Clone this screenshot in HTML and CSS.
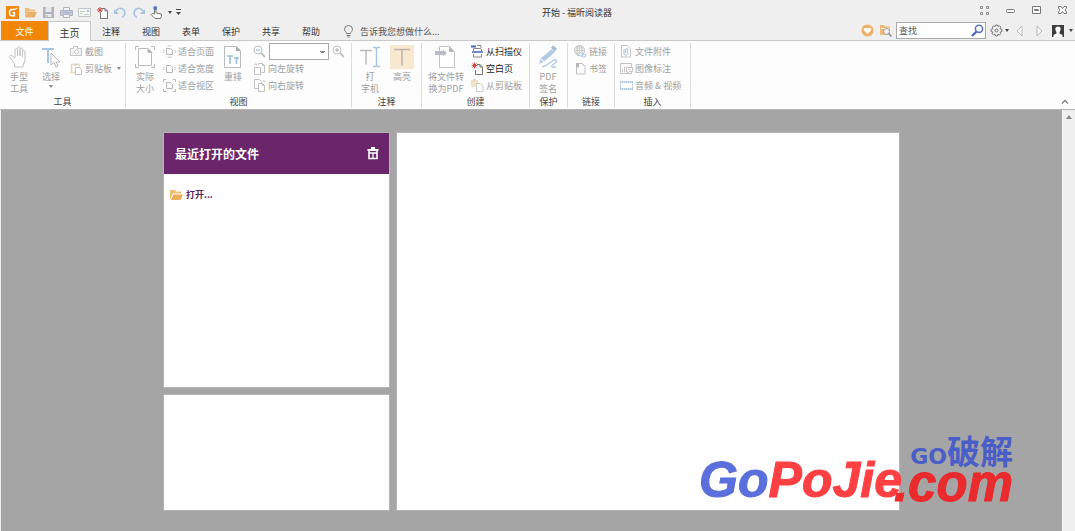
FILE: index.html
```html
<!DOCTYPE html>
<html lang="zh-CN">
<head>
<meta charset="utf-8">
<title>开始 - 福昕阅读器</title>
<link rel="stylesheet" href="styles.css">
</head>
<body>
<div class="app">
  <header class="titlebar">
    <div class="quick">
      <button class="qbtn" aria-label="福昕"><svg width="13" height="13" viewBox="0 0 13 13"><rect width="13" height="13" fill="#f28a12"/><path d="M9 3.600H5.200L3.600 5.200v3.200l1.600 1.400h3.200V6.800H6.400" fill="none" stroke="#fff" stroke-width="1.500"/><path d="M9 3.500l2-1.500" stroke="#fff"/></svg></button>
      <button class="qbtn" aria-label="打开"><svg width="13" height="13" viewBox="0 0 13 13"><path d="M1 11V2h4l1 1.500h5v2H4L2 11z" fill="#efbb7a"/><path d="M4 6h9l-2.500 5.500H1.500z" fill="#eab06a"/></svg></button>
      <button class="qbtn" aria-label="保存"><svg width="13" height="13" viewBox="0 0 13 13"><path d="M1 1h11v11H1z" fill="#b0b3ba"/><path d="M3.500 1h6v5h-6zM3.500 8h6v3h-6z" fill="#e6e8ec"/><path d="M5 9v2" stroke="#acb0b8"/></svg></button>
      <button class="qbtn" aria-label="打印"><svg width="13" height="13" viewBox="0 0 13 13"><path d="M.5 4.500h12v5H.5z" fill="#c4c8d0" stroke="#b0b5c0"/><path d="M3.500 1.500h6v3h-6z" fill="#f4f5f7" stroke="#b0b5c0"/><path d="M3.500 8.500h6v3h-6z" fill="#f4f5f7" stroke="#b0b5c0"/><path d="M2 6.500h9" stroke="#9bb9dd"/></svg></button>
      <button class="qbtn" aria-label="邮件"><svg width="13" height="13" viewBox="0 0 13 13"><path d="M.5 2.500h12v8H.5z" fill="#f7f7f7" stroke="#c0c3c8"/><path d="M2 5.500h5M2 7.500h3M6 8.500h5" stroke="#bcd3c0"/><path d="M9 4h2v2H9z" fill="#a9bddd"/></svg></button>
      <button class="qbtn" aria-label="新建"><svg width="13" height="13" viewBox="0 0 13 13"><path d="M5 2.500h4l2.500 2.500v7.500h-7V7" fill="#fff" stroke="#777"/><path d="M9 2.500V5h2.500" fill="none" stroke="#777"/><path d="M4 1v6M1 4h6M2 2l4 4M6 2L2 6" stroke="#cf4a3e"/></svg></button>
      <button class="qbtn" aria-label="撤销"><svg width="13" height="13" viewBox="0 0 13 13"><path d="M2 5.500a4.600 4.600 0 1 1 6 5.800" fill="none" stroke="#a7c1e2" stroke-width="1.700"/><path d="M0 3v5h5z" fill="#a7c1e2"/></svg></button>
      <button class="qbtn" aria-label="重做"><svg width="13" height="13" viewBox="0 0 13 13"><path d="M11 5.500a4.600 4.600 0 1 0-6 5.800" fill="none" stroke="#a7c1e2" stroke-width="1.700"/><path d="M13 3v5H8z" fill="#a7c1e2"/></svg></button>
      <button class="qbtn" aria-label="触摸模式"><svg width="13" height="13" viewBox="0 0 13 13"><path d="M4.500 8V3H6v4l5.500 1v2l-1 2.500H5L1 8.500l1-1z" fill="#fff" stroke="#777"/><circle cx="5.200" cy="2" r="2" fill="#4c7cc8"/></svg></button>
      <button class="cbtn" aria-label="触摸选项"><i class="caret"></i></button>
      <button class="cbtn" aria-label="自定义"><svg width="5" height="6" viewBox="0 0 5 6"><path d="M0 .5h5" stroke="#444"/><path d="M0 3h5L2.500 6z" fill="#444"/></svg></button>
    </div>
    <h1 class="title">开始 - 福昕阅读器</h1>
    <div class="wctl">
      <button class="wbtn" aria-label="布局"><svg width="11" height="11" viewBox="0 0 11 11" fill="none" stroke="#888"><path d="M1.500 1.500h2v2h-2zM7.500 1.500h2v2h-2zM1.500 7.500h2v2h-2zM7.500 7.500h2v2h-2z"/></svg></button>
      <button class="wbtn" aria-label="最小化"><svg width="11" height="11" viewBox="0 0 11 11"><rect x="1.500" y="4.500" width="8" height="3" rx="1" fill="#fff" stroke="#777"/></svg></button>
      <button class="wbtn" aria-label="还原"><svg width="11" height="11" viewBox="0 0 11 11" fill="#fff" stroke="#777"><path d="M1.500 1.500h8v7h-8zM3.500 4.500h4v1h-4z"/></svg></button>
      <button class="wbtn" aria-label="关闭"><svg width="11" height="11" viewBox="0 0 11 11"><path d="M1.500 1.500h2.500l1.500 2 1.500-2h2.500v1.500L8 5l1.500 2v1.500H7l-1.500-2-1.500 2H1.500V7L3 5 1.500 3z" fill="#fff" stroke="#777"/></svg></button>
    </div>
  </header>

  <nav class="tabs">
    <button class="tab file">文件</button>
    <button class="tab active">主页</button>
    <button class="tab">注释</button>
    <button class="tab">视图</button>
    <button class="tab">表单</button>
    <button class="tab">保护</button>
    <button class="tab">共享</button>
    <button class="tab">帮助</button>
    <button class="tell"><svg width="11" height="13" viewBox="0 0 11 13" fill="none" stroke="#777"><path d="M3.500 8.500C3.500 7 1.500 6.500 1.500 4.300a4 3.800 0 0 1 8 0c0 2.200-2 2.700-2 4.200zM3.500 10.500h4M4.500 12h2"/></svg><span>告诉我您想做什么...</span></button>
    <div class="tools">
      <button class="tbtn" aria-label="收藏"><svg width="13" height="13" viewBox="0 0 13 13"><circle cx="6.500" cy="6.500" r="6" fill="#eeb064"/><path d="M6.500 10L3 6.500C1.800 4.500 4.800 2.500 6.500 4.800 8.200 2.500 11.200 4.500 10 6.500z" fill="#fff"/></svg></button>
      <button class="tbtn" aria-label="查找文件夹"><svg width="13" height="13" viewBox="0 0 13 13"><path d="M1 11V1h4l1 1.500h5V11z" fill="#efb978"/><path d="M2 4.500h8" stroke="#fff"/><circle cx="7.500" cy="7.500" r="3" fill="#f3f3f3" stroke="#999"/><path d="M9.800 9.800l2.700 2.700" stroke="#888" stroke-width="1.500"/></svg></button>
      <form class="search">
        <input type="text" placeholder="查找" aria-label="查找">
        <button class="go" type="button" aria-label="搜索"><svg width="13" height="13" viewBox="0 0 13 13"><circle cx="8" cy="4.800" r="3.600" fill="#fff" stroke="#5576c0" stroke-width="1.600"/><path d="M5.300 7.700L1 12" stroke="#4466b8" stroke-width="2.200"/></svg></button>
      </form>
      <button class="gear" aria-label="设置"><svg width="13" height="13" viewBox="0 0 13 13" fill="none" stroke="#777"><path d="M5.500 1h2l.4 1.500 1.500-.8 1.400 1.400-.8 1.500L12 5.500v2l-1.900.6.700 1.500-1.400 1.400-1.500-.8-.4 1.800h-2l-.5-1.800-1.500.8-1.400-1.400.8-1.500L1 7.500v-2l1.900-.7-.8-1.600 1.400-1.400 1.500.8z"/><circle cx="6.500" cy="6.500" r="1.500"/></svg><i class="caret"></i></button>
      <button class="arrow" aria-label="上一个"><svg width="7" height="12" viewBox="0 0 7 12"><path d="M6 1v10L1 6z" fill="#f8f8f8" stroke="#bbb"/></svg></button>
      <button class="arrow" aria-label="下一个"><svg width="7" height="12" viewBox="0 0 7 12"><path d="M1 1v10l5-5z" fill="#f8f8f8" stroke="#bbb"/></svg></button>
      <button class="user" aria-label="账户"><svg width="12" height="12" viewBox="0 0 12 12"><path d="M0 0h12v12H0z" fill="#3d3d3d"/><path d="M6 1.500c4 0 2.500 4.500 1.500 5.500v1.500l3 1.500v2h-9v-2l3-1.500V7C3.500 6 2 1.500 6 1.500z" fill="#fff"/></svg><i class="caret"></i></button>
    </div>
  </nav>

  <section class="ribbon">
    <div class="group g-tools">
      <div class="body">
        <button class="big"><svg width="22" height="24" viewBox="0 0 22 24"><path d="M6.500 22v-3L2 12.500c-1-2 1-3 2.500-1.500L7 13V5c0-2 2.500-2 2.500 0v6V3.500c0-2 2.500-2 2.500 0V11 4.500c0-2 2.500-2 2.500 0V12 7c0-2 2.500-2 2.500 0v9l-2 4v2z" fill="#fff" stroke="#c0c0c0"/></svg><span>手型<br>工具</span></button>
        <button class="big"><svg width="22" height="24" viewBox="0 0 22 24"><path d="M2 4h12M8 4v14" stroke="#a9c3e2" stroke-width="2"/><path d="M11 8v12l3-2.500 2 4.500 2-1-2-4h4z" fill="#fff" stroke="#b5b5b5"/></svg><span>选择</span><i class="caret dim"></i></button>
        <div class="col">
          <button class="small"><svg width="13" height="13" viewBox="0 0 13 13" fill="none" stroke="#aaa"><path d="M.5 3.500h3v-2h4v2h4v7H.5z"/><circle cx="6.500" cy="6.800" r="2"/><path d="M3 3.500v7M10 3.500v7" stroke="#ddd"/></svg>截图</button>
          <button class="small"><svg width="13" height="13" viewBox="0 0 13 13"><path d="M1.500 2.500h8v8h-8z" fill="#fff" stroke="#e8c88f" stroke-width="1.500"/><path d="M4 1.500h3v2H4z" fill="#bbb"/><path d="M5.500 5.500h4l2 2v5h-6z" fill="#fff" stroke="#aaa"/></svg>剪贴板<i class="caret dim"></i></button>
        </div>
      </div>
      <h2>工具</h2>
    </div>
    <div class="group g-view">
      <div class="body">
        <button class="big"><svg width="22" height="24" viewBox="0 0 22 24" fill="none" stroke="#bbb"><path d="M1.500 5V1.500H5M17 1.500h3.500V5M1.500 19v3.500H5M17 22.500h3.500V19"/><path d="M4.500 3.500h9l4 4v13h-13z" fill="#fff"/><path d="M14 3.500v4h4z" fill="#aaa"/></svg><span>实际<br>大小</span></button>
        <div class="col">
          <button class="small"><svg width="13" height="13" viewBox="0 0 13 13" fill="none" stroke="#999"><path d="M3.500 3.500h4l2 2v4h-6z"/><path d="M5 1.500L6.500 0 8 1.500M5 11.500L6.500 13 8 11.500M1.500 5L0 6.500 1.500 8M11.500 5L13 6.500 11.500 8"/></svg>适合页面</button>
          <button class="small"><svg width="13" height="13" viewBox="0 0 13 13" fill="none" stroke="#999"><path d="M3.500 3.500h4l2 2v5h-6z"/><path d="M1.500 5L0 6.500 1.500 8M11.500 5L13 6.500 11.500 8"/></svg>适合宽度</button>
          <button class="small"><svg width="13" height="13" viewBox="0 0 13 13" fill="none" stroke="#999"><path d="M3.500 3.500h4l2 2v4h-6z"/><path d="M.5 3V.5H3M10 .5h2.500V3M.5 10v2.500H3M10 12.500h2.500V10"/></svg>适合视区</button>
        </div>
        <button class="big reflow"><svg width="22" height="24" viewBox="0 0 22 24"><path d="M2.500 1.500h12l4 4v17h-16z" fill="#fff" stroke="#bbb"/><path d="M14 1.500v4.500h4.500z" fill="#aaa"/><path d="M5 11h6M8 11v8M12 13h5M14.500 13v6" stroke="#9dbce0" stroke-width="1.600"/></svg><span>重排</span></button>
        <div class="col">
          <div class="zoomrow">
            <button class="icon" aria-label="缩小"><svg width="13" height="13" viewBox="0 0 13 13" fill="none" stroke="#c0c0c0"><circle cx="5" cy="5" r="4"/><path d="M8 8l4 4" stroke-width="1.800"/><path d="M3 5h4" stroke="#8fb2dc"/></svg></button>
            <select aria-label="缩放比例"><option></option></select>
            <button class="icon" aria-label="放大"><svg width="13" height="13" viewBox="0 0 13 13" fill="none" stroke="#c0c0c0"><circle cx="5" cy="5" r="4"/><path d="M8 8l4 4" stroke-width="1.800"/><path d="M3 5h4M5 3v4" stroke="#aaa"/></svg></button>
          </div>
          <button class="small"><svg width="13" height="13" viewBox="0 0 13 13" fill="#fff" stroke="#aaa"><path d="M5.500 3V1.500h4l2 2v7h-3M9.500 1.500v2h2"/><path d="M1.500 5.500h6v7h-6zM1 3.500l2-2 1 2"/></svg>向左旋转</button>
          <button class="small"><svg width="13" height="13" viewBox="0 0 13 13" fill="#fff" stroke="#aaa"><path d="M1.500.5h5l2 2v7h-7z"/><path d="M5.500 4.500h4l2 2v6h-6zM9.500 4.500v2h2M10 1.500l2 1v1"/></svg>向右旋转</button>
        </div>
      </div>
      <h2>视图</h2>
    </div>
    <div class="group g-comment">
      <div class="body">
        <button class="big"><svg width="24" height="24" viewBox="0 0 24 24" fill="none"><path d="M2 5.500h12M8 5.500v14" stroke="#bbb" stroke-width="1.500"/><path d="M15 2.500h2.500l1 1 1-1H22M18.500 3v18M15 21.500h2.500l1-1 1 1H22" stroke="#a9c3e2" stroke-width="1.400"/></svg><span>打<br>字机</span></button>
        <button class="big"><svg width="24" height="24" viewBox="0 0 24 24"><path d="M0 0h24v24H0z" fill="#f8e8d0"/><path d="M4 4.500h16M12 4.500v16" stroke="#bcb4aa" stroke-width="1.500"/></svg><span>高亮</span></button>
      </div>
      <h2>注释</h2>
    </div>
    <div class="group g-create">
      <div class="body">
        <button class="big wide"><svg width="22" height="24" viewBox="0 0 22 24"><path d="M4.500 1.500h10l5 5v16h-15z" fill="#fff" stroke="#c4c4c4"/><path d="M14 1.500V7h5.500z" fill="#b5b5b5"/><path d="M0 6h8V4.500L12 8l-4 3.500V10H0z" fill="#b8bcc6"/></svg><span>将文件转<br>换为PDF</span></button>
        <div class="col">
          <button class="small on"><svg width="13" height="13" viewBox="0 0 13 13" fill="none"><path d="M2.500 6V3.500h7l1 1V6" stroke="#888"/><path d="M0 1.500h5" stroke="#4668b8" stroke-width="2"/><path d="M1 7h11" stroke="#4668b8" stroke-width="1.500"/><path d="M2.500 9v3h8V9M6 .5h4v3" stroke="#888"/></svg>从扫描仪</button>
          <button class="small on"><svg width="13" height="13" viewBox="0 0 13 13"><path d="M6 2.500h3l2.500 2.500v7.500h-7V8" fill="#fff" stroke="#777"/><path d="M9 2.500V5h2.500" fill="none" stroke="#777"/><path d="M3.500.5v6M.5 3.500h6M1.500 1.500l4 4M5.500 1.500l-4 4" stroke="#cf4a3e"/></svg>空白页</button>
          <button class="small"><svg width="13" height="13" viewBox="0 0 13 13"><path d="M0 1h7v7H0z" fill="#f0d9ae"/><path d="M2 0h3v2H2z" fill="#ccc"/><path d="M5.500 4.500h4l2.500 2.500v5.500H5.500z" fill="#fff" stroke="#bbb"/></svg>从剪贴板</button>
        </div>
      </div>
      <h2>创建</h2>
    </div>
    <div class="group g-protect">
      <div class="body">
        <button class="big"><svg width="22" height="24" viewBox="0 0 22 24"><path d="M15 4l3 3-10 9-6 3 2-6z" fill="#b3cae5"/><path d="M14 2.500l2-2 4 3-2 3z" fill="#a6b9cf"/><path d="M4 14l4 3" stroke="#fff"/><path d="M5 22c8-2 11-9 14-7s-6 5-4 7h4" fill="none" stroke="#b3cae5" stroke-width="1.300"/></svg><span>PDF<br>签名</span></button>
      </div>
      <h2>保护</h2>
    </div>
    <div class="group g-link">
      <div class="body">
        <div class="col">
          <button class="small"><svg width="13" height="13" viewBox="0 0 13 13" fill="none" stroke="#aaa"><circle cx="5.500" cy="5.500" r="5"/><path d="M.5 5.500h10M5.500.5v10M1.500 3h8M1.500 8h6" stroke="#bbb"/><ellipse cx="5.500" cy="5.500" rx="2.500" ry="5"/><rect x="5" y="8" width="4" height="3" rx="1.500" stroke="#88abd8" fill="#fff"/><rect x="8" y="9" width="4" height="3" rx="1.500" stroke="#88abd8"/></svg>链接</button>
          <button class="small"><svg width="13" height="13" viewBox="0 0 13 13"><path d="M2.500 1.500h6l2.500 2.500v8h-8.500z" fill="#fff" stroke="#aaa"/><path d="M2 1h3v5L3.500 5 2 6z" fill="#999"/><path d="M8.500 1.500V4H11z" fill="#ccc"/></svg>书签</button>
        </div>
      </div>
      <h2>链接</h2>
    </div>
    <div class="group g-insert">
      <div class="body">
        <div class="col">
          <button class="small"><svg width="13" height="13" viewBox="0 0 13 13" fill="none"><path d="M1.500.5h6l3 3v8.500h-9z" fill="#fff" stroke="#aaa"/><path d="M4 4v4.500a1.800 1.800 0 0 0 3.600 0V4.500a1 1 0 0 0-2 0V8" stroke="#88abd8"/></svg>文件附件</button>
          <button class="small"><svg width="13" height="13" viewBox="0 0 13 13" fill="none" stroke="#aaa"><path d="M.5 1.500h11v10H.5z"/><path d="M2.500 10V7M4.500 10V5"/><path d="M6.500 5.500h6v4h-3l-2 2v-2h-1z" fill="#fff"/><path d="M8 7.500h3" stroke="#d9bfae"/></svg>图像标注</button>
          <button class="small"><svg width="13" height="13" viewBox="0 0 13 13"><path d="M.5 2.500h12v8H.5z" fill="#fff" stroke="#a3bfe0"/><path d="M0 3h13M0 10h13" stroke="#8fb0da" stroke-width="2"/><path d="M1 3h12M1 10h12" stroke="#fff" stroke-dasharray="1 1"/></svg>音频 &amp; 视频</button>
        </div>
      </div>
      <h2>插入</h2>
    </div>
    <button class="collapse" aria-label="折叠功能区"><svg width="8" height="5" viewBox="0 0 8 5"><path d="M1 4.500l3-3 3 3" fill="none" stroke="#888" stroke-width="1.500"/></svg></button>
  </section>

  <div class="workspace">
    <main class="start">
      <div class="left">
        <section class="panel recent">
          <header class="phead"><h2>最近打开的文件</h2><button class="trash" aria-label="清除"><svg width="12" height="13" viewBox="0 0 12 13" fill="none" stroke="#fff"><path d="M4 1h4" stroke-width="2"/><path d="M.5 3h11" stroke-width="2"/><path d="M2 4v7.500h8V4" stroke-width="1.600"/><path d="M2 6h8M6 6v5" stroke-width="1.300"/></svg></button></header>
          <a class="open" href="#"><svg width="13" height="12" viewBox="0 0 13 12"><path d="M0 11V1h5l1 1.500h5v2H3z" fill="#f0bd77"/><path d="M3.500 5.500H13L10.500 11H1z" fill="#ebac5c"/></svg>打开...</a>
        </section>
        <section class="panel promo"></section>
      </div>
      <section class="panel right"></section>
    </main>
    <div class="scroll"><button aria-label="向上滚动"><svg width="6" height="4" viewBox="0 0 6 4"><path d="M3 0l3 4H0z" fill="#888"/></svg></button></div>
    <div class="mark">
      <span class="mark-name"><b>Go</b>PoJie</span>
      <div class="mark-side"><span class="mark-cn"><small>GO</small>破解</span><span class="mark-com">.com</span></div>
    </div>
  </div>
</div>
</body>
</html>
```
FILE: styles.css
```css
* { box-sizing: border-box; }
body {
  margin: 0;
  font: 9px/12px "Noto Sans CJK SC", sans-serif;
  color: #333;
  background: #efefef;
}
button {
  margin: 0; padding: 0; border: 0;
  background: none; color: inherit; font: inherit;
  display: flex; align-items: center; justify-content: center;
}
h1, h2 { margin: 0; font: inherit; }
svg { display: block; flex: none; }
.app { display: flex; flex-direction: column; min-height: 100vh; }
.caret {
  width: 0; flex: none;
  border: 2px solid transparent; border-top: 3px solid #444; border-bottom: 0;
}
.caret.dim { border-top-color: #888; }

.titlebar { display: flex; align-items: center; height: 21px; padding-left: 3px; }
.quick { display: flex; height: 21px; padding-top: 3px; }
.qbtn { width: 18px; }
.cbtn { width: 9px; }
.title { flex: 1; padding-top: 4px; text-align: center; }
.wctl { display: flex; }
.wbtn { width: 26px; height: 20px; }

.tabs {
  display: flex; height: 20px; padding-left: 1px;
  border-bottom: 1px solid #c8c8c8;
}
.tab { width: 40px; padding-top: 2px; }
.tab.file { width: 47px; background: #f28608; color: #fff; }
.tab.active {
  width: 43px; height: 20px; font-size: 10px;
  background: #fdfdfd; border: 1px solid #c8c8c8; border-bottom: 0;
}
.tell { gap: 6px; margin-left: 12px; padding-top: 2px; color: #555; }
.tools { display: flex; align-items: center; margin-left: auto; }
.tbtn { width: 18px; }
.search {
  display: flex; width: 90px; height: 17px; margin: 0 3px 0 2px;
  background: #fff; border: 1px solid #aaa;
}
.search input {
  flex: 1; min-width: 0; padding: 0 2px; border: 0; outline: 0;
  background: none; font: inherit; color: #555;
}
.search input::placeholder { color: #555; opacity: 1; }
.go { width: 16px; }
.gear { gap: 2px; width: 20px; }
.arrow { width: 20px; }
.user { gap: 5px; width: 25px; margin-left: 1px; }

.ribbon {
  display: flex; height: 69px; padding: 2px 0 1px;
  background: #fdfdfd; border-bottom: 1px solid #b4b4b4;
}
.group {
  display: flex; flex-direction: column;
  border-right: 1px solid #dcdcdc; color: #a0a0a0;
}
.group h2 { text-align: center; color: #444; }
.body { display: flex; flex: 1; }
.g-tools { width: 126px; }
.g-tools .body { padding-left: 3px; }
.g-view { width: 226px; }
.g-view .body { padding-left: 2px; }
.g-comment { width: 70px; }
.g-comment .body { padding-left: 2px; }
.g-create { width: 108px; }
.g-protect { width: 38px; }
.g-protect .body { padding-left: 2px; }
.g-link { width: 47px; }
.g-link .body { padding-left: 5px; }
.g-insert { width: 76px; }
.g-insert .body { padding-left: 4px; }
.big {
  flex-direction: column; justify-content: flex-start;
  width: 32px; padding-top: 2px;
}
.big span { padding-top: 2px; text-align: center; white-space: nowrap; }
.big .caret { margin-top: 2px; }
.wide { width: 48px; }
.g-view .big { width: 34px; }
.g-view .reflow { width: 38px; }
.col { display: flex; flex-direction: column; padding-left: 1px; }
.g-tools .col { padding-left: 3px; }
.small {
  gap: 2px; height: 17px; justify-content: flex-start; white-space: nowrap;
}
.small svg { opacity: 0.7; }
.small .caret { margin-left: 3px; }
.small.on { color: #222; }
.small.on svg { opacity: 1; }
.zoomrow { display: flex; align-items: center; gap: 3px; height: 17px; }
.zoomrow select {
  width: 60px; height: 17px; border: 1px solid #aaa; border-radius: 0;
  appearance: none; font: inherit;
  background: linear-gradient(#888, #888) right 4px top 8px / 3px 1px no-repeat,
              linear-gradient(#888, #888) right 3px top 7px / 5px 1px no-repeat, #fff;
}
.collapse { align-self: flex-end; width: 20px; height: 14px; margin-left: auto; }

.workspace {
  position: relative; flex: 1; display: flex;
  background: #a5a5a5; border-left: 1px solid #efefef;
}
.start {
  flex: 1; display: grid; grid-template-columns: 227px 1fr; gap: 6px;
  max-width: 737px; margin: 0 auto; padding: 22px 0 20px;
}
.left { display: flex; flex-direction: column; gap: 6px; }
.panel { background: #fff; border: 1px solid #b4b4b4; }
.recent { flex: 257; }
.promo { flex: 116; }
.phead {
  display: flex; align-items: center; justify-content: space-between;
  height: 41px; padding: 0 10px 0 11px; background: #6b266b; color: #fff;
}
.phead h2 { font-size: 12px; font-weight: 700; line-height: 18px; }
.open {
  display: flex; align-items: center; gap: 3px; padding: 15px 6px;
  color: #5a1f5a; font-weight: 700; text-decoration: none;
}
.scroll { width: 13px; background: #efefef; border-left: 1px solid #f8f8f8; }
.scroll button { width: 12px; height: 14px; }

.mark {
  position: absolute; right: 62px; bottom: 34px;
  display: flex; align-items: flex-end;
  font: italic 700 50px/26px "Liberation Sans", sans-serif; color: #ff4043;
  -webkit-text-stroke: 1px;
  pointer-events: none;
}
.mark b { color: #5a6fdb; }
.mark-name { padding-bottom: 4px; }
.mark-side { display: flex; flex-direction: column; align-items: flex-end; margin-left: -8px; }
.mark-com { color: #ea2a2c; font-size: 51px; }
.mark-cn {
  display: flex; align-items: baseline;
  font: 700 33px/28px "Noto Sans CJK SC", sans-serif; color: #4a5ec8;
  -webkit-text-stroke: 0;
}
.mark-cn small { font: 700 22px/28px "DejaVu Sans", sans-serif; }
```
